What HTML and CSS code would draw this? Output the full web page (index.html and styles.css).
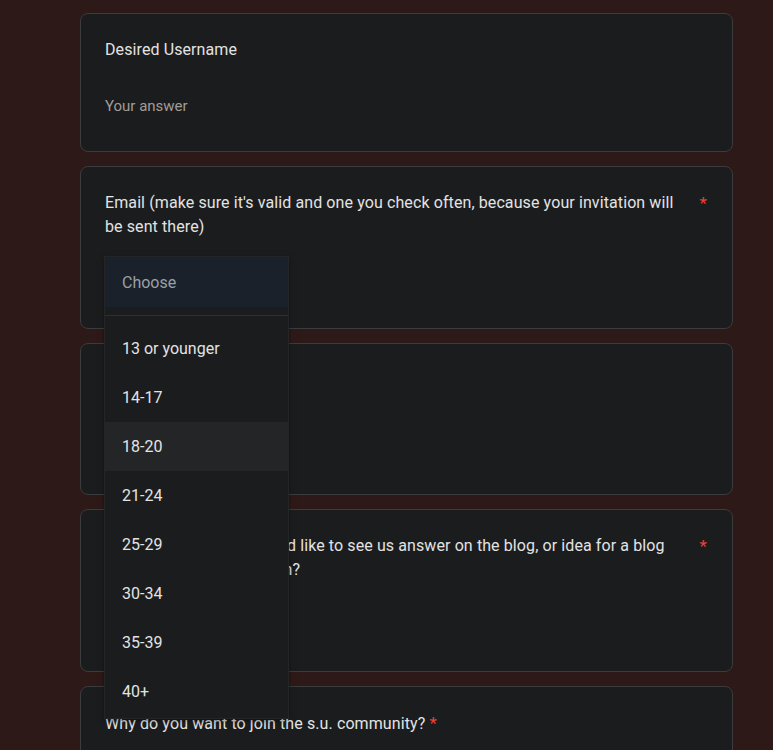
FILE: index.html
```html
<!DOCTYPE html>
<html lang="en">
<head>
    <meta charset="UTF-8">
    <meta name="viewport" content="width=device-width, initial-scale=1.0">
    <title>s.u. community application</title>
    <link rel="stylesheet" href="styles.css">
</head>
<body>
    <div class="form">
        <div class="question">
            <div class="q-title">
                <span class="q-text">Desired Username</span>
            </div>
            <div class="answer">Your answer</div>
        </div>

        <div class="question">
            <div class="q-title">
                <span class="q-text">Email (make sure it's valid and one you check often, because your invitation will be sent there)</span>
                <span class="required">*</span>
            </div>
            <div class="answer">Your answer</div>
        </div>

        <div class="question">
            <div class="q-title">
                <span class="q-text">Age</span>
            </div>
            <div class="select">Choose</div>
        </div>

        <div class="question">
            <div class="q-title">
                <span class="q-text">Is there any question you'd like to see us answer on the blog, or idea for a blog post that you want written?</span>
                <span class="required">*</span>
            </div>
            <div class="answer">Your answer</div>
        </div>

        <div class="question">
            <div class="q-title">
                <span class="q-text">Why do you want to join the s.u. community? <span class="required">*</span></span>
            </div>
            <div class="answer">Your answer</div>
        </div>

        <!-- open age dropdown -->
        <div class="menu">
            <div class="menu-item placeholder">Choose</div>
            <div class="menu-sep"></div>
            <div class="menu-item">13 or younger</div>
            <div class="menu-item">14-17</div>
            <div class="menu-item hover">18-20</div>
            <div class="menu-item">21-24</div>
            <div class="menu-item">25-29</div>
            <div class="menu-item">30-34</div>
            <div class="menu-item">35-39</div>
            <div class="menu-item">40+</div>
        </div>
    </div>
</body>
</html>
```

FILE: styles.css
```css
body {
    margin: 0;
    background: #2d1918;
    color: #e3e3e3;
    font-family: Roboto, "Noto Sans", Arial, sans-serif;
    font-size: 16px;
}
.form {
    position: relative;
    width: 653px;
    margin-left: 80px;
    padding-top: 13px;
    display: flex;
    flex-direction: column;
    gap: 14px;
}
.question {
    background: #1b1c1e;
    border: 1px solid #3b3c3e;
    border-radius: 8px;
    padding: 24px;
}
.q-title {
    display: flex;
    line-height: 24px;
    letter-spacing: 0.1px;
}
.q-text {
    flex: 1;
    max-width: 584px;
}
.required {
    color: #e94235;
    margin-left: auto;
    padding-right: 1px;
    font-size: 17px;
}
.q-text .required {
    margin-left: 0;
}
.answer {
    margin-top: 27px;
    height: 38px;
    padding-top: 5px;
    box-sizing: border-box;
    line-height: 24px;
    color: #a19d99;
    font-size: 15px;
}
.select {
    margin-top: 27px;
    height: 51px;
    width: 183px;
    line-height: 51px;
    color: #9aa0a6;
}
.menu {
    position: absolute;
    left: 25px;
    top: 257px;
    width: 183px;
    padding-bottom: 2px;
    background: #1b1c1e;
    box-shadow: 0 0 0 1px #242527, 0 2px 6px rgba(0, 0, 0, 0.5);
}
.menu-item {
    height: 49px;
    line-height: 49px;
    padding-left: 17px;
}
.menu-item.placeholder {
    height: 50px;
    line-height: 51px;
    background: #1a212b;
    color: #9aa0a6;
}
.menu-item.hover {
    background: #242527;
}
.menu-sep {
    height: 1px;
    margin: 8px 0;
    background: #2e2f31;
}
```
